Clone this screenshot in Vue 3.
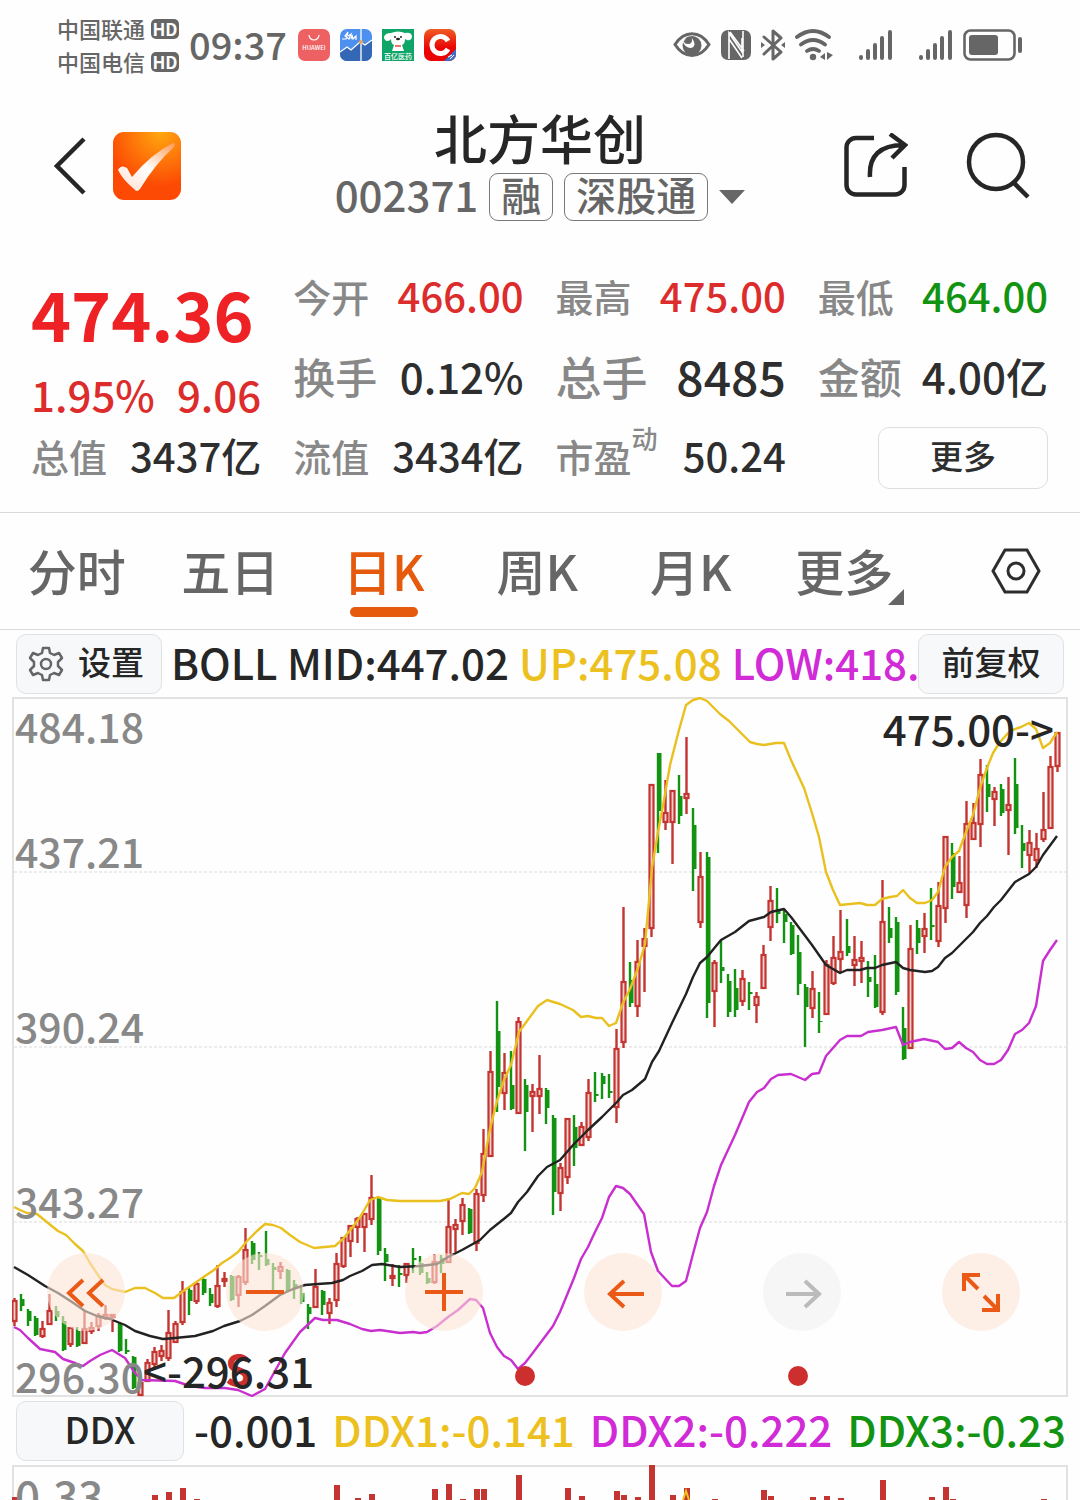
<script setup>
import { ref } from 'vue'

const columns = [
  [
    { label: '今开', value: '466.00', tone: 'up' },
    { label: '换手', value: '0.12%', size: 'mid' },
    { label: '流值', value: '3434亿' },
  ],
  [
    { label: '最高', value: '475.00', tone: 'up' },
    { label: '总手', value: '8485', size: 'big' },
    { label: '市盈', sup: '动', value: '50.24' },
  ],
  [
    { label: '最低', value: '464.00', tone: 'down' },
    { label: '金额', value: '4.00亿', size: 'mid' },
  ],
]

const tabs = ['分时', '五日', '日K', '周K', '月K', '更多']
const active = ref('日K')

// One candle per entry: colour, high, low, body top, body bottom
const raw = `r1298,1326,1301,1321 g1294,1311,1299,1306 g1309,1326,1311,1321 g1316,1336,1318,1335 r1321,1338,1329,1336
r1294,1325,1311,1324 g1306,1321,1311,1317 g1316,1351,1321,1350 r1327,1347,1328,1344 g1327,1347,1331,1346
r1311,1344,1329,1343 r1322,1334,1328,1331 r1313,1331,1316,1326 r1305,1320,1315,1318 r1315,1332,1315,1317
g1323,1352,1324,1351 g1339,1354,1350,1352 g1356,1389,1357,1388 r1380,1396,1383,1395 r1359,1382,1363,1381
r1347,1367,1352,1364 r1345,1361,1351,1356 r1310,1361,1333,1358 r1321,1343,1324,1342 r1281,1325,1292,1322
g1287,1315,1290,1301 r1282,1304,1284,1301 g1278,1295,1279,1293 g1288,1306,1294,1303 r1265,1308,1286,1306
r1272,1287,1279,1281 g1275,1301,1276,1300 r1275,1307,1277,1295 r1228,1285,1250,1282 g1241,1264,1243,1260
g1252,1270,1255,1257 g1231,1266,1259,1265 g1263,1290,1267,1270 r1262,1279,1267,1271 g1269,1292,1270,1291
g1280,1299,1284,1287 g1287,1304,1293,1302 g1304,1329,1307,1314 r1269,1308,1287,1307 g1290,1315,1291,1305
r1298,1324,1303,1313 r1253,1307,1264,1300 r1237,1268,1238,1266 r1225,1257,1226,1241 r1217,1243,1219,1227
r1213,1252,1214,1227 r1175,1225,1198,1219 g1197,1255,1198,1251 g1248,1281,1254,1262 r1264,1286,1276,1278
g1265,1287,1273,1275 r1263,1283,1264,1275 g1248,1273,1258,1260 g1256,1275,1263,1273 g1272,1284,1278,1283
r1254,1284,1262,1282 g1255,1273,1258,1264 r1198,1263,1227,1262 r1219,1252,1225,1229 r1198,1235,1205,1221
g1208,1234,1209,1233 r1189,1251,1194,1243 r1129,1202,1154,1195 r1051,1157,1072,1156 g1001,1112,1031,1087
r1053,1110,1073,1093 g1051,1110,1085,1109 r1017,1114,1022,1113 g1079,1151,1085,1112 r1084,1132,1092,1096
r1055,1114,1089,1096 g1088,1124,1090,1108 g1115,1215,1118,1192 r1163,1211,1168,1193 r1118,1184,1119,1177
g1115,1166,1127,1148 r1122,1146,1127,1145 r1079,1141,1093,1137 g1072,1102,1094,1096 g1073,1099,1076,1084
g1074,1098,1091,1093 r1029,1123,1049,1107 r907,1048,982,1042 g962,1007,980,1003 r940,1017,962,1006
r928,992,939,946 r784,937,785,928 g753,853,753,811 r780,830,813,822 r790,864,791,822
g775,824,796,816 r737,814,794,798 g808,891,825,869 r852,928,877,922 g852,1018,857,1003
r960,1027,963,991 g940,983,967,971 g974,1017,981,1012 g969,1017,988,1010 r970,1006,979,1001
g982,1010,992,994 r992,1023,997,1005 r945,989,955,988 r886,941,901,927 g888,923,910,914
g910,943,914,922 g922,955,925,954 g935,995,952,984 g984,1047,987,1007 r971,1018,989,1008
g992,1033,1021,1022 r960,1015,965,1014 r936,985,958,983 r910,972,952,959 g919,956,946,953
r936,986,960,965 r941,983,958,961 g961,997,977,982 g955,1008,984,1007 r880,1015,922,1012
g907,943,928,938 g917,995,922,992 g1007,1060,1028,1059 r925,1049,949,1048 g920,954,928,943
r913,953,929,936 g888,940,925,927 r882,947,906,941 r836,923,837,908 g843,899,853,887
r856,892,883,892 r801,918,824,905 r803,840,823,839 r759,847,775,824 g765,812,784,797
r787,826,792,799 g784,816,789,813 r777,855,805,810 g758,834,784,828 g825,868,843,851
r830,874,843,855 r833,868,849,860 r792,842,830,839 r756,829,767,828 r732,772,733,766`

const candles = raw.split(/\s+/).map((item, i) => {
  const [high, low, top, bottom] = item.slice(1).split(',').map(Number)
  return { x: 14 + i * 7, rise: item[0] === 'r', high, low, top, bottom }
})

const upper = '14,1207 20,1210 27,1213 37,1214 48,1223 58,1231 66,1235 75,1244 83,1251 90,1263 98,1275 105,1285 112,1289 125,1292 135,1288 145,1288 155,1293 163,1298 174,1298 182,1292 195,1283 205,1276 214,1270 222,1263 230,1258 238,1252 247,1241 257,1231 265,1224 273,1225 281,1228 290,1235 300,1242 314,1248 335,1246 343,1239 355,1224 362,1214 370,1200 378,1197 387,1200 400,1201 440,1201 450,1199 462,1193 469,1194 475,1188 482,1172 490,1129 497,1101 504,1080 511,1065 519,1032 527,1021 538,1006 547,1000 560,1004 573,1010 581,1017 588,1016 596,1018 602,1018 609,1026 616,1023 623,1003 630,989 638,968 645,944 652,868 658,832 664,800 670,765 679,730 686,705 693,700 700,698 707,701 720,714 729,721 743,735 750,742 757,744 764,745 776,743 784,743 791,760 804,788 812,813 819,837 826,872 833,890 840,905 850,904 860,903 867,905 875,905 882,899 890,897 897,896 903,890 910,898 917,903 925,903 932,900 938,892 945,867 952,857 959,851 966,832 973,815 980,788 987,768 993,753 1000,742 1010,731 1021,727 1029,723 1036,729 1043,748 1050,743 1057,732'
const middle = '14,1267 28,1275 45,1286 58,1293 72,1302 85,1311 97,1316 110,1319 125,1325 135,1331 150,1336 163,1339 175,1338 195,1336 213,1331 224,1326 240,1321 252,1315 265,1306 280,1295 293,1289 305,1285 318,1284 332,1283 343,1280 350,1276 362,1271 372,1265 382,1264 400,1267 420,1266 437,1264 448,1257 462,1250 480,1240 490,1230 505,1218 511,1213 518,1202 527,1192 538,1176 547,1167 560,1160 574,1144 588,1130 602,1117 617,1102 623,1095 632,1090 645,1079 652,1062 659,1051 672,1023 686,994 693,977 700,963 707,957 721,940 735,932 749,921 764,917 771,912 784,909 791,917 812,945 826,965 840,973 847,970 860,970 867,968 875,968 882,965 896,962 903,968 910,970 925,972 932,971 938,967 945,958 952,953 973,932 980,923 987,916 994,907 1001,900 1015,882 1029,874 1036,867 1043,855 1057,836'
const lower = '14,1327 20,1330 28,1338 40,1349 55,1352 63,1359 75,1363 83,1366 90,1361 100,1355 112,1350 125,1358 135,1373 142,1380 175,1381 190,1386 205,1388 225,1388 238,1390 252,1396 265,1389 275,1371 285,1353 300,1332 315,1318 323,1320 337,1320 350,1324 362,1329 371,1331 380,1330 400,1333 413,1332 420,1333 427,1332 437,1326 448,1317 458,1310 470,1299 476,1300 483,1308 490,1333 497,1347 504,1356 511,1360 518,1369 525,1363 532,1354 553,1326 560,1312 567,1295 574,1278 581,1259 588,1247 595,1232 602,1218 609,1197 616,1186 623,1188 630,1194 644,1214 651,1252 658,1271 672,1286 679,1286 686,1281 693,1254 700,1228 707,1212 714,1186 721,1165 735,1135 749,1102 757,1092 764,1088 771,1079 778,1075 791,1074 805,1080 812,1074 819,1073 826,1056 840,1040 847,1036 861,1036 868,1032 882,1030 896,1027 903,1045 910,1042 924,1039 938,1042 945,1049 952,1048 959,1042 966,1048 973,1052 980,1060 987,1064 994,1064 1001,1060 1008,1050 1015,1034 1022,1030 1029,1023 1036,1006 1043,961 1050,950 1057,940'

const axis = [
  ['484.18', 743],
  ['437.21', 868],
  ['390.24', 1043],
  ['343.27', 1218],
  ['296.30', 1393],
]

const ddxBars = [
  [15, 1497], [155, 1495], [169, 1492], [183, 1488], [197, 1499], [337, 1485], [358, 1498], [372, 1494],
  [435, 1489], [449, 1484], [463, 1499], [477, 1489], [484, 1489], [519, 1475], [568, 1488], [582, 1496],
  [617, 1491], [624, 1495], [638, 1497], [652, 1465], [673, 1495], [687, 1488], [715, 1499], [764, 1490],
  [771, 1496], [813, 1497], [827, 1496], [841, 1498], [883, 1480], [932, 1497], [946, 1487], [953, 1499],
  [1044, 1499],
]
</script>

<template>
  <div class="page">
    <div class="status">
      <div class="carriers">
        <span>中国联通<b>HD</b></span>
        <span>中国电信<b>HD</b></span>
      </div>
      <time class="clock">09:37</time>
      <div class="apps">
        <svg viewBox="0 0 32 32">
          <rect width="32" height="32" rx="7" fill="#ee6163" />
          <path d="M11 6a5 5 0 0 0 10 0" fill="none" stroke="#fff" stroke-width="1.2" />
          <text x="16" y="21" text-anchor="middle" class="tiny">HUAWEI</text>
        </svg>
        <svg viewBox="0 0 32 32">
          <rect width="32" height="32" rx="7" fill="#4d90f0" />
          <path d="M0 23l7-5 4 3 9-8 5 3 7-6v15a7 7 0 0 1-7 7H7a7 7 0 0 1-7-7z" fill="#3467b5" />
          <path d="M0 23l7-5 4 3 9-8 5 3 7-5M21 0v32" fill="none" stroke="#fff" stroke-width="1.3" />
          <path d="M2 10h4L8 3 5 7l4 3 2-5-3 2M11 10l1-4 1 4 3-3v4" fill="none" stroke="#fff" stroke-width="1.2" />
          <circle cx="21" cy="13" r="2" fill="#eda353" />
        </svg>
        <svg viewBox="0 0 32 32">
          <rect width="32" height="32" fill="#10a568" />
          <path d="M9 4q7-3 14 0 7-1 7 4-1 4-5 3l-2-1q0 5-3 6l2 6H10l2-6q-3-1-3-6-1 2-4 2-3-1-3-4 1-4 7-4z" fill="#fff" />
          <circle cx="13" cy="8" r="1" fill="#222" /><circle cx="19" cy="8" r="1" fill="#222" />
          <ellipse cx="16" cy="10" rx="2" ry="1.2" fill="#222" />
          <path d="M13 17h6" stroke="#e43b33" stroke-width="1.4" />
          <text x="16" y="30" text-anchor="middle" class="tiny cn">百亿医药</text>
        </svg>
        <svg viewBox="0 0 32 32">
          <defs><linearGradient id="ca" x2="0" y2="1"><stop stop-color="#ef5c24" /><stop offset=".6" stop-color="#ea0505" /></linearGradient></defs>
          <rect width="32" height="32" rx="7" fill="url(#ca)" />
          <path d="M24 12A8.500 8.500 0 1 0 24 20" fill="none" stroke="#fff" stroke-width="5" />
          <path d="M32 20v5a7 7 0 0 1-7 7h-5z" fill="#3e6dca" />
          <path d="M24 28l4-2M26 30l4-4" stroke="#fff" stroke-width="1" />
        </svg>
      </div>
      <div class="indicators">
        <svg width="38" height="32" viewBox="0 0 38 32">
          <path d="M2 15.500C11 1 27 1 36 15.500 27 30 11 30 2 15.500z" fill="none" stroke="#666" stroke-width="3" />
          <circle cx="19" cy="16.500" r="9.500" fill="#666" />
          <path d="M10 13a9 9 0 0 0 7 6 4 4 0 0 0 4-6q-1-4-5-5-4 1-6 5z" fill="#fefefe" />
          <path d="M14 8q5-1 5 3t-4 4-4-3z" fill="#666" />
        </svg>
        <svg width="30" height="32" viewBox="0 0 30 32">
          <rect y="1" width="30" height="30" rx="7" fill="#666" />
          <path d="M8 30V4l13 19V9M9 3l14 19M22 2v26M8 10l13 19" fill="none" stroke="#fff" stroke-width="1.600" />
        </svg>
        <svg width="24" height="34" viewBox="0 0 24 34">
          <path d="M3 9l17 15-8 7V3l8 7L3 26" fill="none" stroke="#666" stroke-width="3" stroke-linejoin="round" stroke-linecap="round" />
          <path d="M0 14l4 3-4 3zM24 14l-4 3 4 3z" fill="#666" />
        </svg>
        <svg width="38" height="32" viewBox="0 0 38 32">
          <path d="M2 8Q18 -4 34 8M6 15.500q12-9 24 0M12 22q6-4 12 0" fill="none" stroke="#666" stroke-width="3.800" stroke-linecap="round" />
          <circle cx="18" cy="28" r="3.200" fill="#666" />
          <path d="M30 24v7l-5-3zM32 23l6 3-6 5z" fill="#666" />
        </svg>
        <svg v-for="n in 2" :key="n" class="signal" width="34" height="32" viewBox="0 0 34 32">
          <path d="M2 28v1M9 22v7M16 16v13M23 9v20M31 3v26" stroke="#666" stroke-width="4" stroke-linecap="round" />
        </svg>
        <svg width="60" height="32" viewBox="0 0 60 32">
          <rect x="1.500" y="1.500" width="50" height="29" rx="6" fill="none" stroke="#666" stroke-width="2.600" />
          <rect x="6" y="6" width="29" height="20" rx="3" fill="#666" />
          <path d="M57 10v12" stroke="#666" stroke-width="4" stroke-linecap="round" />
        </svg>
      </div>
    </div>

    <header class="head">
      <div class="head-left">
        <button class="icon" aria-label="返回">
          <svg width="32" height="58" viewBox="0 0 32 58"><path d="M30 2L3 29l27 27" fill="none" stroke="#262626" stroke-width="4.500" /></svg>
        </button>
        <svg width="68" height="68" viewBox="0 0 68 68">
          <defs>
            <radialGradient id="lg" cx=".7" cy="0" r=".8"><stop stop-color="#ffa80f" /><stop offset="1" stop-color="#fc4a04" /></radialGradient>
            <linearGradient id="ck" x1="1" y1="0" x2=".2" y2="1"><stop stop-color="#ff9a55" /><stop offset=".55" stop-color="#fff" /><stop offset="1" stop-color="#ffe3d6" /></linearGradient>
          </defs>
          <rect width="68" height="68" rx="11" fill="url(#lg)" />
          <path d="M5 38q3-6 9-2l5 9Q38 22 60 11q3 0 1 4Q42 32 27 57q-3 4-6 0Q10 48 5 38z" fill="url(#ck)" />
        </svg>
      </div>
      <div class="title">
        <h1>北方华创</h1>
        <div class="code">
          <span class="number">002371</span><span class="badge">融</span><span class="badge">深股通</span>
          <svg width="26" height="14" viewBox="0 0 26 14"><path d="M0 0h26L13 14z" fill="#666" /></svg>
        </div>
      </div>
      <div class="head-right">
        <button class="icon" aria-label="分享">
          <svg width="64" height="66" viewBox="0 0 64 66" fill="none" stroke="#262626" stroke-width="4.500">
            <path d="M30 5H12A9.500 9.500 0 0 0 2.500 14.500V52A9.500 9.500 0 0 0 12 61.500H51A9.500 9.500 0 0 0 60.500 52V34M26 44Q24 12 60 12M46 1l15 11-13 13" />
          </svg>
        </button>
        <button class="icon" aria-label="搜索">
          <svg width="64" height="68" viewBox="0 0 64 68" fill="none" stroke="#262626" stroke-width="4.500">
            <circle cx="30" cy="30" r="27" /><path d="M47 50l15 15" />
          </svg>
        </button>
      </div>
    </header>

    <section class="quote">
      <div class="col main">
        <strong class="price">474.36</strong>
        <div class="change"><span>1.95%</span><span>9.06</span></div>
        <div class="cell"><span class="label">总值</span><span>3437亿</span></div>
      </div>
      <div v-for="(col, c) in columns" :key="c" class="col">
        <div v-for="item in col" :key="item.label" class="cell" :class="[item.tone, item.size]">
          <span class="label">{{ item.label }}<sup v-if="item.sup">{{ item.sup }}</sup></span>
          <span>{{ item.value }}</span>
        </div>
        <div v-if="c === 2" class="cell more"><button class="more-btn">更多</button></div>
      </div>
    </section>

    <nav class="tabs">
      <button v-for="tab in tabs" :key="tab" class="tab" :class="{ active: active === tab, menu: tab === '更多' }" @click="active = tab">
        {{ tab }}
      </button>
      <button class="icon gear" aria-label="图表设置">
        <svg width="50" height="46" viewBox="0 0 50 46" fill="none" stroke="#2d2d2d" stroke-width="3">
          <path d="M14 2h22l12 21-12 21H14L2 23z" /><circle cx="25" cy="23" r="8" />
        </svg>
      </button>
    </nav>

    <div class="bar boll">
      <button class="chip setting">
        <svg width="36" height="36" viewBox="0 0 36 36" fill="none" stroke="#666" stroke-width="2.500" stroke-linejoin="round">
          <path d="M15 2h6l1 5 4 2 5-2 3 5-4 4v4l4 4-3 5-5-2-4 2-1 5h-6l-1-5-4-2-5 2-3-5 4-4v-4l-4-4 3-5 5 2 4-2z" /><circle cx="18" cy="18" r="5" />
        </svg>
        <span>设置</span>
      </button>
      <p class="values"><span>BOLL MID:447.02</span><span class="yellow">UP:475.08</span><span class="purple">LOW:418.96</span></p>
      <button class="chip"><span>前复权</span></button>
    </div>

    <div class="chart">
      <svg viewBox="12 697 1056 700" class="plot">
        <rect x="13" y="698" width="1054" height="698" fill="none" stroke="#e2e2e2" stroke-width="2" />
        <path d="M14 872H1066M14 1047H1066M14 1222H1066" stroke="#e6e6e6" stroke-width="1.500" stroke-dasharray="3 2" />
        <g v-for="k in candles" :key="k.x">
          <template v-if="k.rise">
            <path :d="`M${k.x + 0.5} ${k.high}V${k.top}M${k.x + 0.5} ${k.bottom}V${k.low}`" stroke="#c43431" stroke-width="2.400" />
            <rect :x="k.x - 1.5" :y="k.top" width="4" :height="k.bottom - k.top" fill="#f6d2cf" stroke="#c43431" stroke-width="2.200" />
          </template>
          <template v-else>
            <path :d="`M${k.x} ${k.high}V${k.low}`" stroke="#129412" stroke-width="2.400" />
            <rect :x="k.x - 1" :y="k.top" width="4.500" :height="k.bottom - k.top" fill="#129412" />
          </template>
        </g>
        <g fill="none" stroke-width="2.400" stroke-linejoin="round">
          <polyline :points="upper" stroke="#eac01f" />
          <polyline :points="middle" stroke="#222" />
          <polyline :points="lower" stroke="#c92fcf" />
        </g>
        <g class="axis"><text v-for="a in axis" :key="a[0]" x="15" :y="a[1]">{{ a[0] }}</text></g>
        <g fill="#cd2f2f"><circle cx="525" cy="1376" r="10" /><circle cx="798" cy="1376" r="10" /></g>
        <text x="238" y="1386" text-anchor="middle" class="mark">S</text>
        <text x="1054" y="746" text-anchor="end" class="note">475.00-&gt;</text>
        <text x="143" y="1388" class="note">&lt;-296.31</text>
      </svg>
      <div class="controls">
        <button class="round" aria-label="快退"><svg viewBox="0 0 78 78"><path d="M36 27L22 40l14 13M56 27L42 40l14 13" /></svg></button>
        <button class="round" aria-label="缩小"><svg viewBox="0 0 78 78"><path d="M20 39h38" /></svg></button>
        <button class="round" aria-label="放大"><svg viewBox="0 0 78 78"><path d="M20 39h38M39 20v38" /></svg></button>
        <button class="round" aria-label="左移"><svg viewBox="0 0 78 78"><path d="M60 41H26M40 28L26 41l14 13" /></svg></button>
        <button class="round" aria-label="右移" disabled><svg viewBox="0 0 78 78"><path d="M23 41h34M42 28l14 13-14 13" /></svg></button>
        <button class="round" aria-label="全屏"><svg viewBox="0 0 78 78"><path d="M38 22H22v16M22 22l14 14M56 41v16H40M56 57L42 43" /></svg></button>
      </div>
    </div>

    <div class="bar ddx">
      <button class="chip"><span>DDX</span></button>
      <p class="values"><span>-0.001</span><span class="yellow">DDX1:-0.141</span><span class="purple">DDX2:-0.222</span><span class="green">DDX3:-0.236</span></p>
    </div>

    <div class="chart">
      <svg viewBox="12 1464 1056 36" class="plot">
        <path d="M13 1500V1466H1067V1500" fill="none" stroke="#e2e2e2" stroke-width="2" />
        <rect v-for="b in ddxBars" :key="b[0]" :x="b[0] - 3" :y="b[1]" width="6" :height="1500 - b[1]" fill="#c43431" />
        <path d="M683 1500l3-9 3 9" fill="none" stroke="#f0c020" stroke-width="2" />
        <text x="15" y="1514" class="axis large">0.33</text>
      </svg>
    </div>
  </div>
</template>

<style>
body {
  margin: 0;
  background: #fefefe;
  overflow-x: hidden;
}
</style>

<style scoped>
.page {
  font-family: "Noto Sans CJK SC", "Noto Sans", sans-serif;
  font-weight: 500;
  color: #262626;
  background: #fefefe;
}
button {
  font: inherit;
  color: inherit;
  margin: 0;
  padding: 0;
  border: 0;
  background: none;
}
svg {
  display: block;
  flex: none;
}
.status {
  display: flex;
  align-items: center;
  height: 90px;
  padding: 0 57px;
  color: #666;
}
.carriers {
  display: grid;
  font-size: 22px;
  line-height: 33px;
}
.carriers span {
  display: flex;
  align-items: center;
  gap: 6px;
}
.carriers b {
  width: 28px;
  border-radius: 5px;
  background: #666;
  color: #fff;
  font: bold 17px/20px "Noto Sans CJK SC", sans-serif;
  text-align: center;
}
.clock {
  margin-left: 10px;
  width: 99px;
  padding-bottom: 4px;
  font-size: 38px;
}
.apps {
  display: flex;
  gap: 10px;
  margin-left: 10px;
}
.apps svg {
  width: 32px;
  height: 32px;
}
.tiny {
  font-size: 6px;
  fill: #fff;
}
.cn {
  font-size: 7px;
}
.indicators {
  display: flex;
  align-items: center;
  gap: 10px;
  margin-left: auto;
}
.signal {
  margin-left: 16px;
}
.head {
  display: grid;
  grid-template-columns: 1fr auto 1fr;
  align-items: center;
  height: 152px;
  padding: 0 50px;
}
.head-left,
.head-right {
  display: flex;
  align-items: center;
  gap: 27px;
}
.head-left {
  padding-left: 4px;
}
.head-right {
  justify-content: flex-end;
  gap: 58px;
}
.title {
  display: grid;
  gap: 5px;
  justify-items: center;
}
h1 {
  margin: 0;
  padding-bottom: 6px;
  font-size: 53px;
  line-height: 50px;
  font-weight: 500;
}
.code {
  display: flex;
  align-items: center;
  gap: 11px;
  height: 48px;
  line-height: 40px;
  color: #666;
}
.number {
  padding-bottom: 6px;
  font-size: 42px;
}
.badge {
  border: 1px solid #777;
  border-radius: 9px;
  padding: 0 11px 6px;
  font-size: 40px;
}
.quote {
  display: grid;
  grid-template-columns: repeat(4, 1fr);
  gap: 32px;
  padding: 13px 32px 17px 31px;
  border-bottom: 1px solid #d8dadc;
  font-size: 40px;
  color: #2e2e2e;
}
.col {
  display: grid;
  grid-template-rows: 80px 80px 80px;
}
.main {
  grid-template-rows: 96px 64px 60px;
  padding-top: 10px;
}
.cell,
.change {
  display: flex;
  align-items: center;
  justify-content: space-between;
  white-space: nowrap;
}
.price {
  font-size: 68px;
  line-height: 96px;
  color: #ee2225;
}
.change {
  font-size: 42px;
  color: #dc2c2c;
}
.label {
  position: relative;
  font-size: 38px;
  color: #888;
}
.mid,
.mid .label {
  font-size: 42px;
}
.big {
  font-size: 48px;
}
.big .label {
  font-size: 46px;
}
.up {
  color: #dc2c2c;
}
.down,
.green {
  color: #129412;
}
sup {
  position: absolute;
  left: 100%;
  top: -8px;
  font-size: 26px;
  line-height: 36px;
}
.more {
  justify-content: flex-end;
  padding-top: 6px;
}
.more-btn {
  width: 170px;
  height: 62px;
  padding-bottom: 6px;
  border: 1px solid #dcdfe1;
  border-radius: 11px;
  font-size: 33px;
}
.tabs {
  display: grid;
  grid-template-columns: repeat(6, 1fr) 159px;
  height: 116px;
  border-bottom: 1px solid #d8dadc;
  font-size: 49px;
  color: #666;
}
.tab {
  position: relative;
  padding-bottom: 4px;
}
.active {
  color: #e55a0c;
}
.active::after {
  content: "";
  position: absolute;
  left: calc(50% - 34px);
  bottom: 12px;
  width: 68px;
  height: 10px;
  border-radius: 5px;
  background: #e55a0c;
}
.menu::after {
  content: "";
  position: absolute;
  right: 17px;
  bottom: 24px;
  border: 8px solid #666;
  border-top-color: transparent;
  border-left-color: transparent;
}
.gear {
  display: grid;
  place-items: center;
  padding-left: 30px;
}
.bar {
  display: flex;
  align-items: center;
  gap: 12px;
  height: 67px;
  padding: 0 16px;
  font-size: 42px;
}
.chip {
  display: flex;
  flex: none;
  align-items: center;
  justify-content: center;
  gap: 14px;
  width: 146px;
  height: 60px;
  border: 1px solid #dfe2e5;
  border-radius: 10px;
  background: #f6f8fa;
  font-size: 33px;
}
.chip span {
  padding-bottom: 6px;
}
.setting {
  padding-right: 6px;
}
.values {
  display: flex;
  flex: 1;
  gap: 10px;
  min-width: 0;
  margin: 0;
  padding-bottom: 4px;
  overflow: hidden;
  white-space: nowrap;
}
.boll {
  gap: 0;
}
.boll .values {
  padding-left: 9px;
}
.ddx {
  gap: 10px;
  padding-right: 12px;
}
.ddx .values {
  gap: 15px;
}
.ddx .chip {
  width: 168px;
  font-size: 36px;
}
.yellow {
  color: #ecc11f;
}
.purple {
  color: #d02bd6;
}
.chart {
  position: relative;
  margin: 0 12px;
}
.plot {
  width: 100%;
  height: auto;
}
.axis {
  font-size: 41px;
  fill: #888;
}
.large {
  font-size: 44px;
}
.note {
  font-size: 42px;
  fill: #262626;
}
.mark {
  font-size: 42px;
  font-weight: 700;
  fill: #cd2f2f;
}
.controls {
  position: absolute;
  left: 35px;
  right: 48px;
  bottom: 66px;
  display: flex;
  justify-content: space-between;
}
.round {
  width: 78px;
  height: 78px;
  border-radius: 50%;
  background: rgba(253, 228, 214, 0.6);
}
.round path {
  fill: none;
  stroke: #ea5a16;
  stroke-width: 4;
}
.round:disabled {
  background: rgba(240, 240, 240, 0.6);
}
.round:disabled path {
  stroke: #bbb;
}
</style>
